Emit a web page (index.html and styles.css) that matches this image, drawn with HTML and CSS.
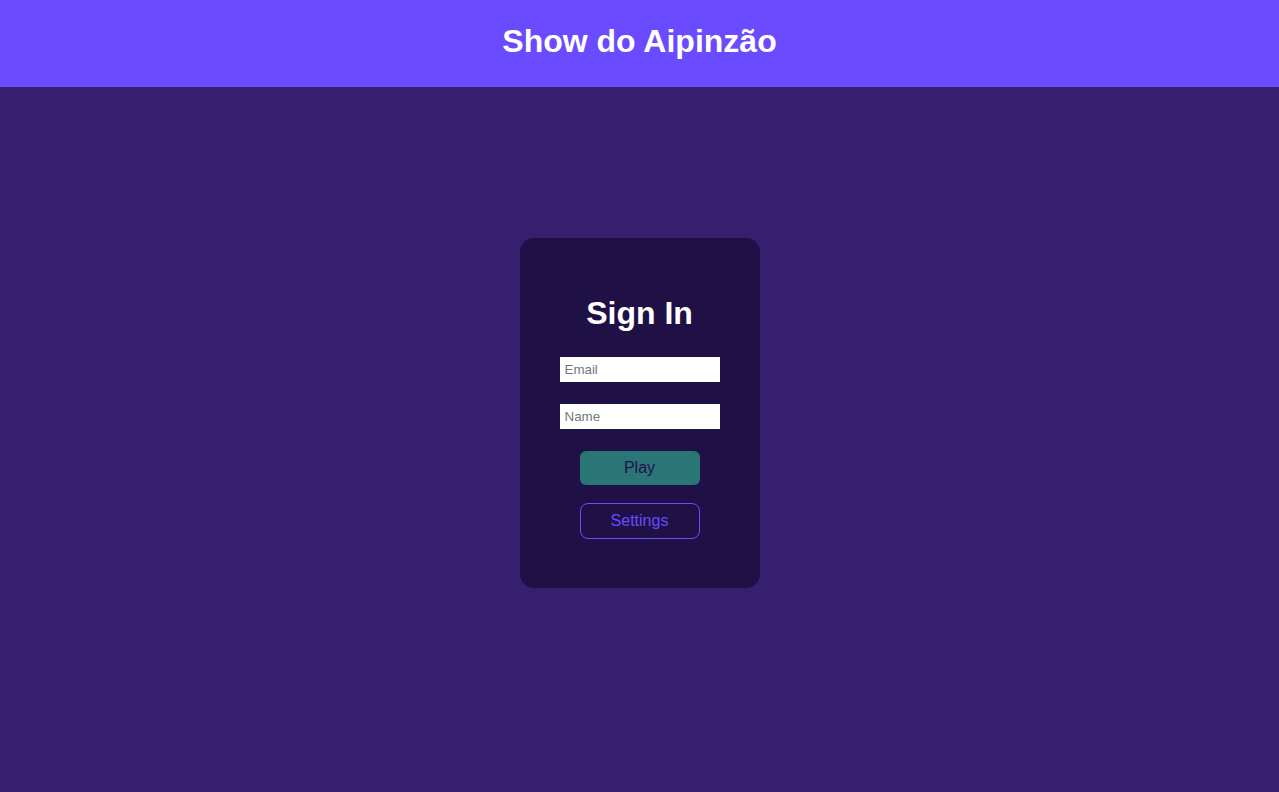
FILE: index.html
```html
<!DOCTYPE html>
<html lang="pt">
<head>
<meta charset="utf-8">
<title>Show do Aipinzão</title>
<link rel="stylesheet" href="styles.css">
</head>
<body>
<header class="topbar">
  <h1 class="title">Show do Aipinzão</h1>
</header>
<main class="stage">
  <section class="card">
    <h2 class="card-title">Sign In</h2>
    <input class="field" type="email" placeholder="Email">
    <input class="field field-second" type="text" placeholder="Name">
    <button class="btn btn-play">Play</button>
    <button class="btn btn-settings">Settings</button>
  </section>
</main>
</body>
</html>
```
FILE: styles.css
```css
* { box-sizing: border-box; }
html, body {
  margin: 0;
  padding: 0;
  height: 100%;
}
body {
  background: #361f6f;
  font-family: "Liberation Sans", Arial, sans-serif;
  color: #fff;
}
.topbar {
  height: 87px;
  background: #6a4bff;
  display: flex;
  align-items: center;
  justify-content: center;
}
.title {
  margin: 0;
  font-size: 32px;
  font-weight: 700;
  color: #fff;
  line-height: 1;
  position: relative;
  top: -3px;
}
.stage {
  display: flex;
  justify-content: center;
  padding-top: 151px;
}
.card {
  width: 240px;
  height: 350px;
  background: #1f1146;
  border-radius: 14px;
  padding: 57px 40px 0;
  display: flex;
  flex-direction: column;
  align-items: center;
}
.card-title {
  margin: 0;
  font-size: 32px;
  font-weight: 700;
  line-height: 37px;
  color: #fff;
}
.field {
  margin-top: 25px;
  width: 160px;
  height: 25px;
  border: none;
  background: #fff;
  padding: 0 5px;
  font-family: "Liberation Sans", Arial, sans-serif;
  font-size: 13.33px;
  color: #222;
  outline: none;
}
.field::placeholder { color: #767676; }
.field-second { margin-top: 22px; }
.btn {
  width: 120px;
  font-family: "Liberation Sans", Arial, sans-serif;
  font-size: 16px;
  cursor: pointer;
}
.btn-play {
  margin-top: 22px;
  height: 34px;
  background: #2a7576;
  color: #20124a;
  border: none;
  border-radius: 6px;
}
.btn-settings {
  margin-top: 18px;
  height: 36px;
  background: transparent;
  color: #6a4bff;
  border: 1px solid #6a4bff;
  border-radius: 8px;
}
```
